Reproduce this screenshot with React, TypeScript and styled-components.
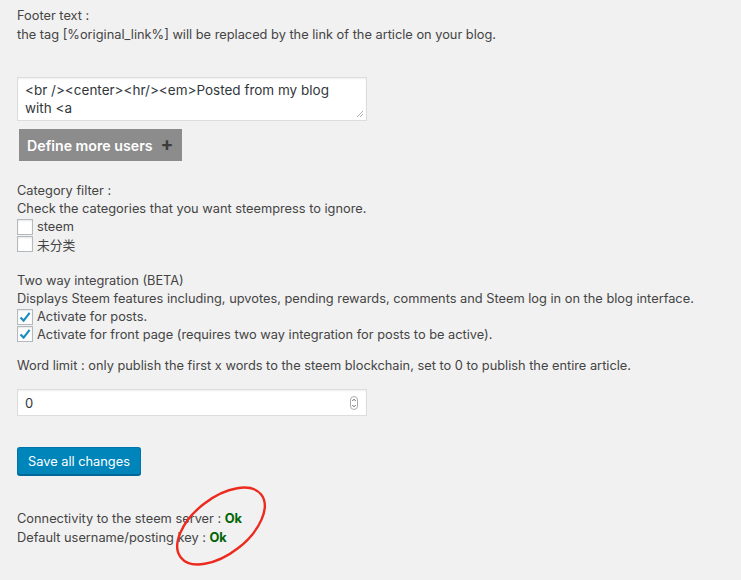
import React from 'react';
import styled, { createGlobalStyle } from 'styled-components';

const GlobalStyle = createGlobalStyle`
  html, body {
    margin: 0;
    padding: 0;
    background: #f1f1f1;
  }
  body {
    font-family: Inter, 'Liberation Sans', Arial, sans-serif;
    font-size: 12.8px;
    color: #444;
  }
`;

const Page = styled.div`
  position: relative;
  width: 741px;
  height: 580px;
  padding: 6px 0 0 17px;
  box-sizing: border-box;
  overflow: hidden;
`;

const Section = styled.div<{ $gap?: number }>`
  margin-top: ${({ $gap }) => $gap ?? 0}px;
`;

const Line = styled.div<{ $lh?: number }>`
  line-height: ${({ $lh }) => $lh ?? 18}px;
  white-space: nowrap;
`;

const TextArea = styled.div`
  position: relative;
  width: 350px;
  height: 44px;
  box-sizing: border-box;
  background: #fff;
  border: 1px solid #ddd;
  box-shadow: inset 0 1px 2px rgba(0, 0, 0, 0.07);
  padding: 3px 7px;
  line-height: 18px;
  font-size: 13.5px;
  color: #32373c;
`;

const Grip = styled.svg`
  position: absolute;
  right: 2px;
  bottom: 2px;
`;

const GreyButton = styled.div`
  display: inline-flex;
  align-items: center;
  gap: 8px;
  margin: 8px 0 0 2px;
  height: 32px;
  padding: 0 8px 0 8px;
  background: #8c8c8c;
  color: #fff;
  font-size: 14.2px;
  font-weight: 600;
`;

const Plus = styled.span`
  color: #3c3c3c;
  font-size: 19px;
  font-weight: bold;
  line-height: 1;
  margin-top: -2px;
`;

const CheckRow = styled.label`
  display: flex;
  align-items: center;
  gap: 4px;
  height: 17.5px;
  line-height: 17px;
`;

const Box = styled.span`
  display: inline-flex;
  align-items: center;
  justify-content: center;
  width: 16px;
  height: 16px;
  box-sizing: border-box;
  background: #fff;
  border: 1px solid #b4b9be;
  box-shadow: inset 0 1px 2px rgba(0, 0, 0, 0.1);
`;

const Cjk = styled.span`
  font-family: 'Noto Sans CJK SC', sans-serif;
`;

const NumberInput = styled.div`
  display: flex;
  align-items: center;
  justify-content: space-between;
  width: 350px;
  height: 27px;
  box-sizing: border-box;
  margin-top: 14px;
  background: #fff;
  border: 1px solid #ddd;
  box-shadow: inset 0 1px 2px rgba(0, 0, 0, 0.07);
  padding: 0 8px 0 7px;
  color: #32373c;
  font-size: 13px;
`;

const SaveButton = styled.div`
  display: inline-flex;
  align-items: center;
  margin-top: 31px;
  height: 28px;
  padding: 0 10px;
  box-sizing: border-box;
  background: #0085ba;
  border: 1px solid #0073aa;
  border-bottom-color: #006799;
  border-radius: 3px;
  box-shadow: 0 1px 0 #006799;
  color: #fff;
  font-size: 12.8px;
`;

const Ok = styled.b`
  color: #006505;
`;

const Annotation = styled.svg`
  position: absolute;
  left: 160px;
  top: 480px;
  pointer-events: none;
`;

const Check = ({ checked }: { checked?: boolean }) => (
  <Box>
    {checked && (
      <svg width="12" height="12" viewBox="0 0 12 12">
        <path d="M1.5 6.5 L4.6 9.6 L10.6 1.8" fill="none" stroke="#1e8cbe" strokeWidth="2.2" />
      </svg>
    )}
  </Box>
);

const App: React.FC = () => (
  <Page>
    <GlobalStyle />
    <Section>
      <Line $lh={19}>Footer text :</Line>
      <Line $lh={19}>the tag [%original_link%] will be replaced by the link of the article on your blog.</Line>
    </Section>

    <Section $gap={33}>
      <TextArea>
        &lt;br /&gt;&lt;center&gt;&lt;hr/&gt;&lt;em&gt;Posted from my blog
        <br />
        with &lt;a
        <Grip width="8" height="8" viewBox="0 0 8 8">
          <path d="M7 1 L1 7 M7 4 L4 7" stroke="#999" strokeWidth="0.8" />
        </Grip>
      </TextArea>
      <GreyButton>
        Define more users <Plus>+</Plus>
      </GreyButton>
    </Section>

    <Section $gap={21}>
      <Line>Category filter :</Line>
      <Line>Check the categories that you want steempress to ignore.</Line>
      <CheckRow>
        <Check /> steem
      </CheckRow>
      <CheckRow>
        <Check /> <Cjk>未分类</Cjk>
      </CheckRow>
    </Section>

    <Section $gap={19}>
      <Line>Two way integration (BETA)</Line>
      <Line>Displays Steem features including, upvotes, pending rewards, comments and Steem log in on the blog interface.</Line>
      <CheckRow>
        <Check checked /> Activate for posts.
      </CheckRow>
      <CheckRow>
        <Check checked /> Activate for front page (requires two way integration for posts to be active).
      </CheckRow>
    </Section>

    <Section $gap={14}>
      <Line>Word limit : only publish the first x words to the steem blockchain, set to 0 to publish the entire article.</Line>
      <NumberInput>
        <span>0</span>
        <svg width="8" height="14" viewBox="0 0 8 14">
          <rect x="0.5" y="0.5" width="7" height="13" rx="3.5" fill="#fff" stroke="#aaa" />
          <path d="M2.3 5 L4 3.2 L5.7 5 M2.3 9 L4 10.8 L5.7 9" fill="none" stroke="#555" strokeWidth="0.9" />
        </svg>
      </NumberInput>
    </Section>

    <SaveButton>Save all changes</SaveButton>

    <Section $gap={34}>
      <Line $lh={19}>
        Connectivity to the steem server : <Ok>Ok</Ok>
      </Line>
      <Line $lh={19}>
        Default username/posting key : <Ok>Ok</Ok>
      </Line>
    </Section>

    <Annotation width="120" height="95" viewBox="0 0 120 95">
      <ellipse
        cx="61"
        cy="46"
        rx="51"
        ry="28"
        transform="rotate(-38 61 46)"
        fill="none"
        stroke="#ec2a1e"
        strokeWidth="2.4"
      />
    </Annotation>
  </Page>
);

export default App;
